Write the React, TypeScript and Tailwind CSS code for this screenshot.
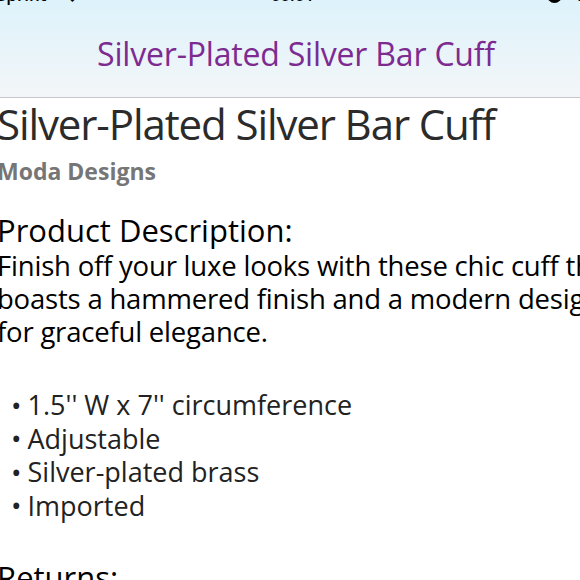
import React from 'react';

const bullets = ["1.5'' W x 7'' circumference", 'Adjustable', 'Silver-plated brass', 'Imported'];

const StatusBar = () => (
  <div className="h-[5px] overflow-hidden">
    <div className="-mt-[15px] flex h-[20px] items-center justify-between text-[17px] font-semibold leading-[20px] text-black">
      <div className="-ml-[3px] flex items-center gap-[20px]">
        <span>Sprint</span>
        <span className="text-[14px]">◆</span>
      </div>
      <span className="-ml-[40px]">00:01</span>
      <div className="-mr-[6px] flex items-center gap-[14px]">
        <span className="h-[15px] w-[15px] rounded-full bg-black" />
        <span>8</span>
      </div>
    </div>
  </div>
);

const App = () => {
  return (
    <div className="h-[580px] w-[580px] overflow-hidden bg-white font-['Open_Sans',sans-serif]">
      <header className="h-[98px] border-b border-[#c8c8cc] bg-linear-to-b from-[#ddf2fb] to-[#f3f6f8]">
        <StatusBar />
        <div className="flex h-[92px] items-center justify-center pl-[12px] pt-[6px]">
          <h1 className="text-[32px] tracking-[-0.2px] leading-none text-[#7d2a91]">Silver-Plated Silver Bar Cuff</h1>
        </div>
      </header>

      <main className="-ml-[3px] whitespace-nowrap text-[#222]">
        <h2 className="pt-[1px] text-[42px] tracking-[-1.1px] leading-[50px] text-[#2b2b2b]">Silver-Plated Silver Bar Cuff</h2>
        <p className="mt-[7px] text-[23px] font-bold leading-[30px] text-[#767676]">Moda Designs</p>

        <h3 className="mt-[25px] text-[31px] leading-[38px] text-black">Product Description:</h3>
        <p className="text-[27.5px] tracking-[-0.2px] leading-[33px] text-black">
          Finish off your luxe looks with these chic cuff that
          <br />
          boasts a hammered finish and a modern design
          <br />
          for graceful elegance.
        </p>

        <ul className="mt-[40px] pl-[14px] text-[27px] leading-[33.5px] text-[#222]">
          {bullets.map((b) => (
            <li key={b} className="flex items-center gap-[6px]">
              <span className="text-[28px] leading-none">•</span>
              <span>{b}</span>
            </li>
          ))}
        </ul>

        <h3 className="mt-[36px] text-[31px] leading-[38px] text-black">Returns:</h3>
      </main>
    </div>
  );
};

export default App;
